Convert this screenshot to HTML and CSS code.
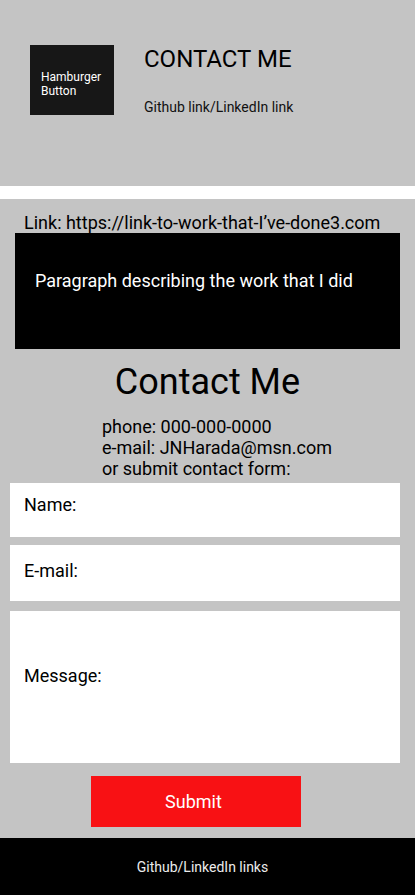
FILE: index.html
```html
<!DOCTYPE html>
<html lang="en">
<head>
<meta charset="utf-8">
<title>Contact Me</title>
<link rel="stylesheet" href="styles.css">
</head>
<body>
<header class="top">
  <div class="burger">Hamburger<br>Button</div>
  <div class="title-col">
    <h1 class="title">CONTACT ME</h1>
    <p class="social">Github link/LinkedIn link</p>
  </div>
</header>
<main class="main">
  <p class="work-link">Link: https://link-to-work-that-I’ve-done3.com</p>
  <div class="work-box">Paragraph describing the work that I did</div>
  <h2 class="contact-heading">Contact Me</h2>
  <div class="contact-info">
    <div>phone: 000-000-0000</div>
    <div>e-mail: JNHarada@msn.com</div>
    <div>or submit contact form:</div>
  </div>
  <form class="form">
    <div class="field field-name">Name:</div>
    <div class="field field-email">E-mail:</div>
    <div class="field field-message">Message:</div>
    <div class="submit-row"><button type="button" class="submit">Submit</button></div>
  </form>
</main>
<footer class="footer">Github/LinkedIn links</footer>
</body>
</html>
```

FILE: styles.css
```css
* { box-sizing: border-box; }
html, body { margin: 0; padding: 0; }
body {
  background: #ffffff;
  font-family: Roboto, "Liberation Sans", sans-serif;
  color: #000;
  width: 415px;
}
.top {
  background: #c4c4c4;
  height: 186px;
  display: flex;
  align-items: flex-start;
  padding: 45px 0 0 30px;
  gap: 30px;
}
.burger {
  width: 84px;
  height: 70px;
  background: #171717;
  color: #fff;
  font-size: 12px;
  line-height: 14px;
  padding: 25px 0 0 11px;
}
.title-col {
  display: flex;
  flex-direction: column;
  margin-top: -0.5px;
}
.title {
  margin: 0;
  font-size: 24px;
  font-weight: 400;
  line-height: 28px;
}
.social {
  margin: 26px 0 0;
  font-size: 14px;
  line-height: 16px;
  color: #111;
}
.main {
  margin-top: 13px;
  background: #c4c4c4;
  height: 639px;
  padding: 13px 0 0;
  display: flex;
  flex-direction: column;
}
.work-link {
  margin: 0;
  padding-left: 24px;
  font-size: 18px;
  line-height: 21px;
}
.work-box {
  margin: 0 15px;
  height: 116px;
  background: #000;
  color: #fff;
  font-size: 18px;
  line-height: 21px;
  padding: 37px 0 0 20px;
}
.contact-heading {
  margin: 12px 0 0;
  text-align: center;
  font-size: 36px;
  font-weight: 400;
  line-height: 42px;
}
.contact-info {
  margin: 13px 0 0 102px;
  font-size: 18px;
  line-height: 21px;
}
.form {
  margin: 4px 0 0;
  display: flex;
  flex-direction: column;
}
.field {
  margin: 0 15px 0 10px;
  background: #fff;
  font-size: 18px;
  line-height: 21px;
  padding-left: 14px;
}
.field-name { height: 54px; padding-top: 11px; }
.field-email { height: 56px; padding-top: 15px; margin-top: 8px; }
.field-message { height: 152px; padding-top: 54px; margin-top: 10px; }
.submit-row {
  margin-top: 13px;
  padding-left: 91px;
}
.submit {
  width: 210px;
  height: 51px;
  border: 0;
  background: #f81114;
  color: #fff;
  font-family: Roboto, "Liberation Sans", sans-serif;
  font-size: 18px;
  padding: 0 5px 0 0;
  display: flex;
  align-items: center;
  justify-content: center;
}
.footer {
  background: #000;
  color: #ececec;
  height: 57px;
  display: flex;
  align-items: center;
  justify-content: center;
  padding-right: 10px;
  font-size: 14px;
}
```
